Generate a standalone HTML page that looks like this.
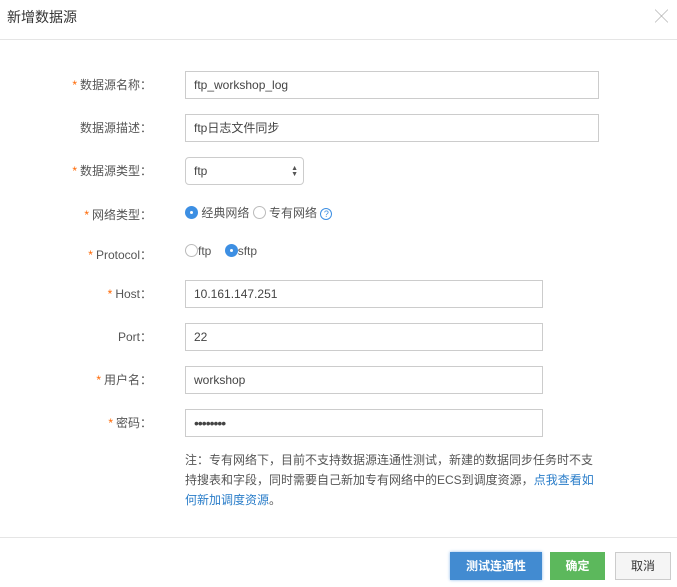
<!DOCTYPE html>
<html><head><meta charset="utf-8"><style>
*{box-sizing:border-box;margin:0;padding:0}
body{width:677px;height:587px;background:#fff;font-family:"Liberation Sans","Noto Sans CJK SC",sans-serif;font-size:12px;color:#333;position:relative;overflow:hidden}
.a{position:absolute}
.title{left:7px;top:7px;font-size:14px;color:#333}
.close{right:9px;top:6px;font-size:13px;color:#999;font-weight:lighter}
.hr{left:0;width:677px;height:1px;background:#e5e5e5}
.lbl{width:152px;text-align:right;left:0;color:#555;line-height:28px;height:28px}
.lbl b{color:#f60;font-weight:normal;margin-right:3px}
.inp{left:185px;height:28px;border:1px solid #ccc;padding-left:8px;line-height:26px;color:#444}
.radio{display:inline-block;width:13px;height:13px;border-radius:50%;border:1px solid #bbb;vertical-align:-2px;background:#fff;position:relative}
.radio.on{background:#3d8fe3;border-color:#3d8fe3}
.radio.on:after{content:"";position:absolute;left:4px;top:4px;width:3px;height:3px;background:#fff;border-radius:50%}
.note{left:185px;top:450px;width:412px;line-height:20px;color:#555}
.note a{color:#2a7dc9;text-decoration:none}
.btn{height:28px;line-height:28px;text-align:center;top:552px;font-weight:bold;color:#fff}
</style></head><body>
<div class="a title">新增数据源</div>
<div class="a close">╳</div>
<div class="a hr" style="top:39px"></div>

<div class="a lbl" style="top:71px"><b>*</b>数据源名称：</div>
<div class="a inp" style="top:71px;width:414px">ftp_workshop_log</div>
<div class="a lbl" style="top:114px">数据源描述：</div>
<div class="a inp" style="top:114px;width:414px">ftp日志文件同步</div>
<div class="a lbl" style="top:157px"><b>*</b>数据源类型：</div>
<div class="a inp" style="top:157px;width:119px;border-radius:4px">ftp<span style="position:absolute;right:5px;top:0;font-size:7px;line-height:6px;padding-top:8px;color:#555">▲<br>▼</span></div>

<div class="a lbl" style="top:201px"><b>*</b>网络类型：</div>
<div class="a" style="left:185px;top:204px;color:#555"><span class="radio on"></span> 经典网络 <span class="radio"></span> 专有网络 <span style="display:inline-block;width:12px;height:12px;border:1px solid #3d8fe3;border-radius:50%;color:#3d8fe3;font-size:9px;line-height:10px;text-align:center">?</span></div>
<div class="a lbl" style="top:241px"><b>*</b>Protocol：</div>
<div class="a" style="left:185px;top:244px;color:#555"><span class="radio"></span>ftp &nbsp;&nbsp;&nbsp;<span class="radio on"></span>sftp</div>

<div class="a lbl" style="top:280px"><b>*</b>Host：</div>
<div class="a inp" style="top:280px;width:358px">10.161.147.251</div>
<div class="a lbl" style="top:323px">Port：</div>
<div class="a inp" style="top:323px;width:358px">22</div>
<div class="a lbl" style="top:366px"><b>*</b>用户名：</div>
<div class="a inp" style="top:366px;width:358px">workshop</div>
<div class="a lbl" style="top:409px"><b>*</b>密码：</div>
<div class="a inp" style="top:409px;width:358px;font-size:14px;letter-spacing:-1px">••••••••</div>

<div class="a note">注：专有网络下，目前不支持数据源连通性测试，新建的数据同步任务时不支持搜表和字段，同时需要自己新加专有网络中的ECS到调度资源，<a>点我查看如何新加调度资源</a>。</div>

<div class="a hr" style="top:537px"></div>
<div class="a btn" style="left:450px;width:92px;background:#428bd1;box-shadow:0 0 3px #8bb8ea">测试连通性</div>
<div class="a btn" style="left:550px;width:55px;background:#5cb85c">确定</div>
<div class="a btn" style="left:615px;width:56px;background:#f5f5f5;border:1px solid #ccc;color:#333;font-weight:normal;line-height:26px">取消</div>
</body></html>
